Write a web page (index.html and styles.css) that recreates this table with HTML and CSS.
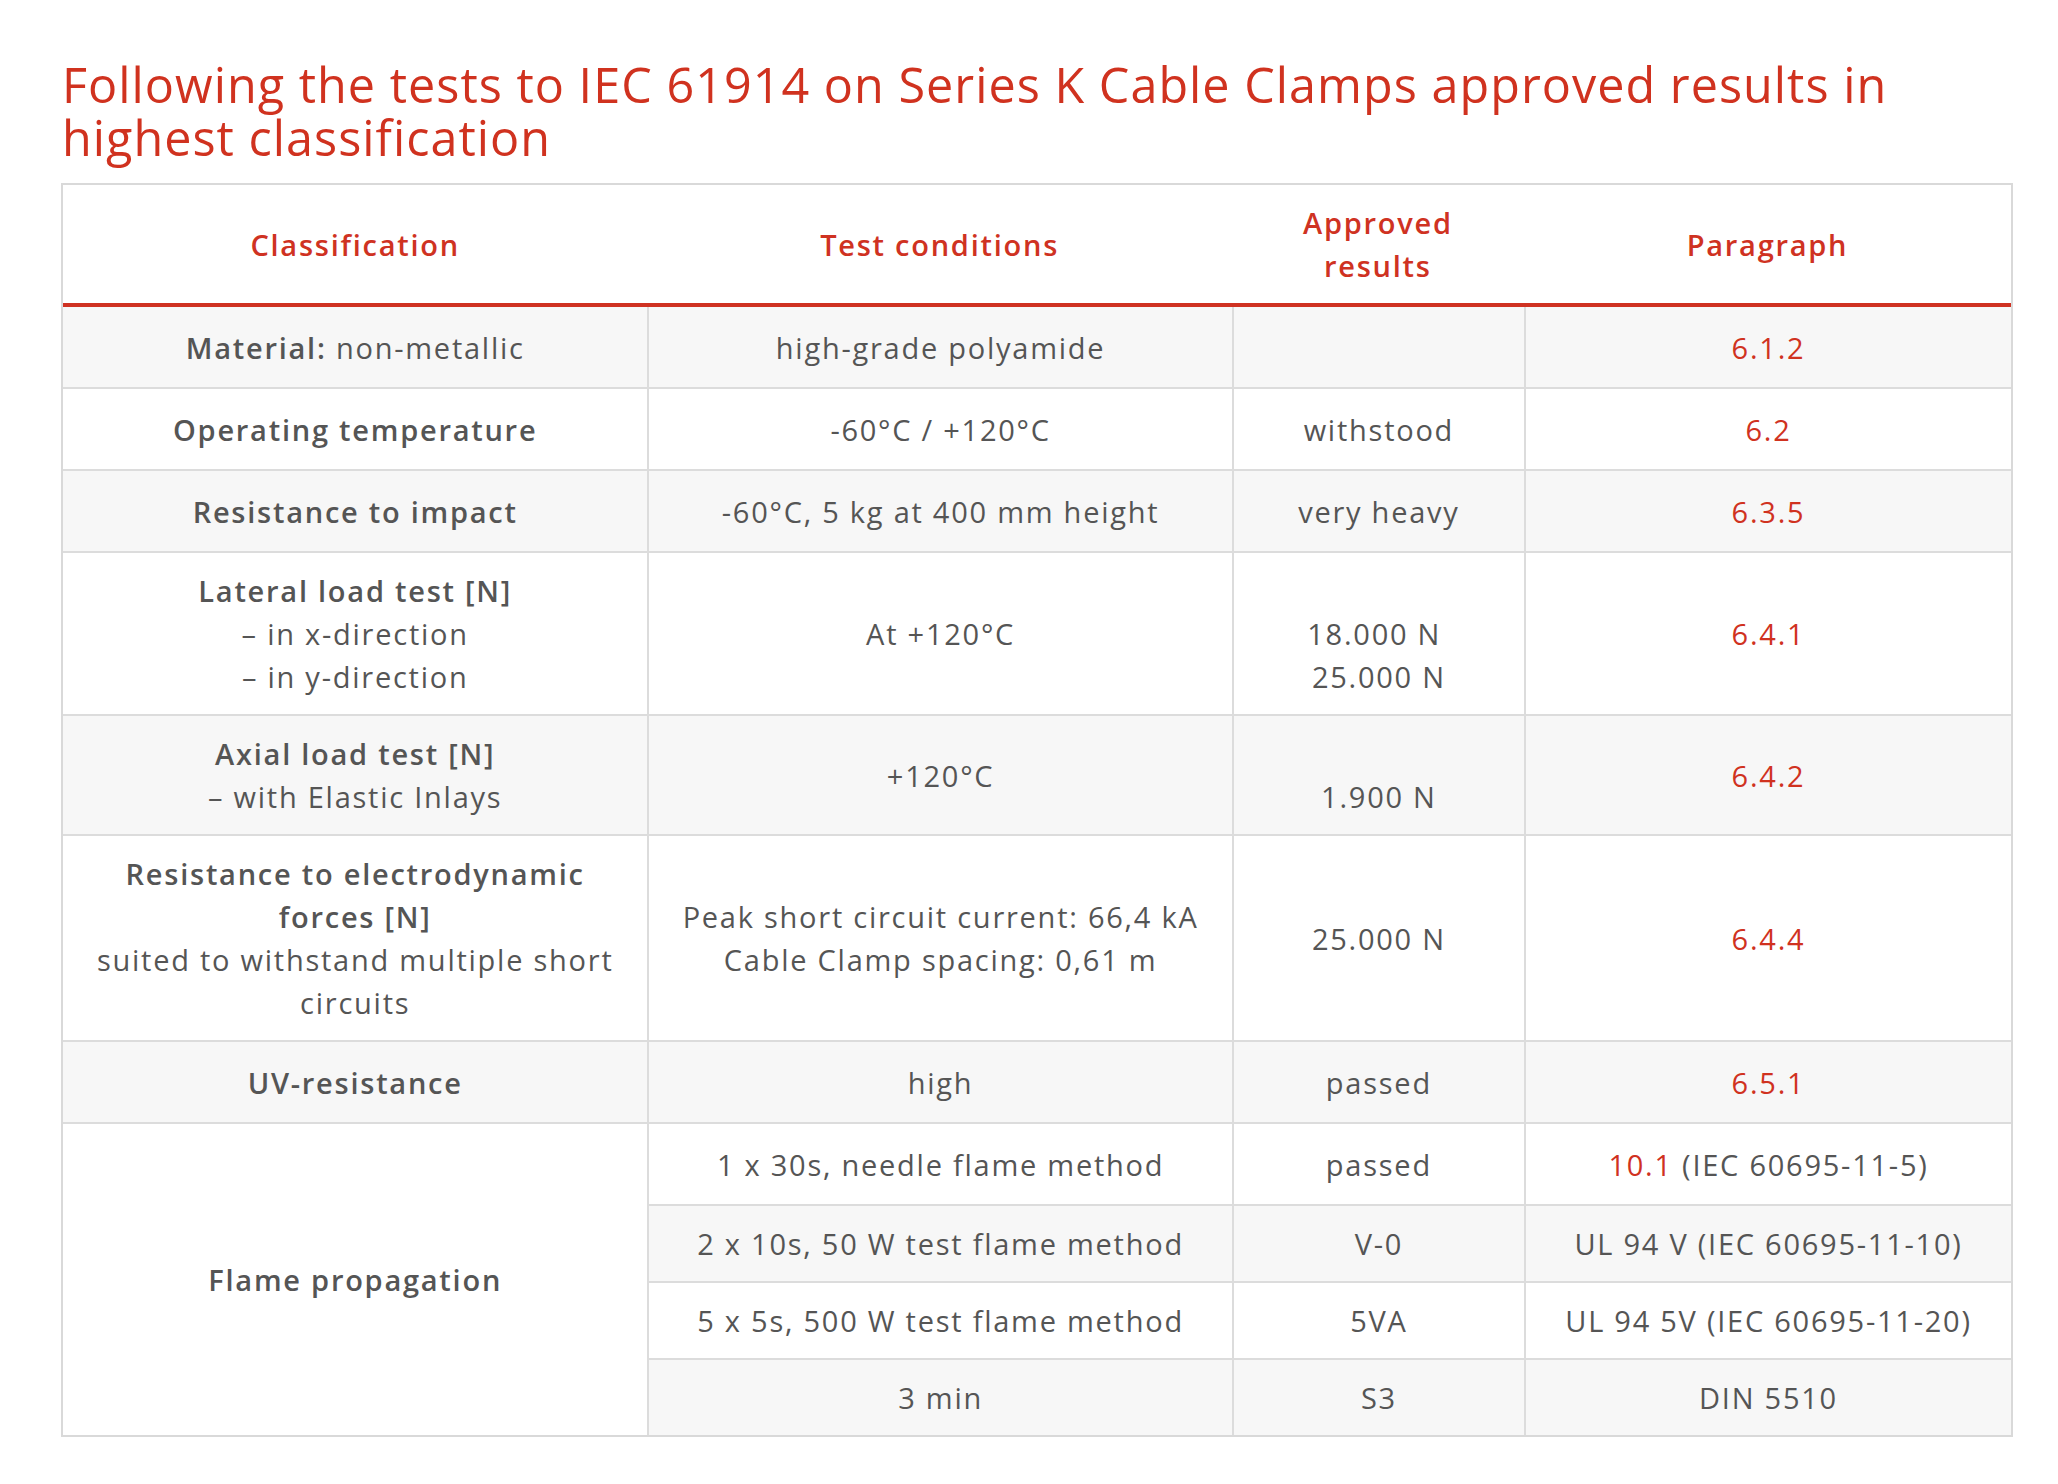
FILE: index.html
```html
<!DOCTYPE html>
<html lang="en">
<head>
<meta charset="utf-8">
<title>IEC 61914 Series K Cable Clamps</title>
<link rel="stylesheet" href="styles.css">
</head>
<body>
<main class="page">
  <h2 class="title">Following the tests to IEC 61914 on Series K Cable Clamps approved results in highest classification</h2>
  <table class="results">
    <colgroup>
      <col class="c1"><col class="c2"><col class="c3"><col class="c4">
    </colgroup>
    <thead>
      <tr>
        <th>Classification</th>
        <th>Test conditions</th>
        <th>Approved results</th>
        <th>Paragraph</th>
      </tr>
    </thead>
    <tbody>
      <tr class="odd first">
        <td class="cls"><b>Material:</b> non-metallic</td>
        <td class="bl">high-grade polyamide</td>
        <td class="bl"></td>
        <td class="bl"><a class="ref">6.1.2</a></td>
      </tr>
      <tr>
        <td class="cls"><b>Operating temperature</b></td>
        <td class="bl">-60°C / +120°C</td>
        <td class="bl">withstood</td>
        <td class="bl"><a class="ref">6.2</a></td>
      </tr>
      <tr class="odd">
        <td class="cls"><b>Resistance to impact</b></td>
        <td class="bl">-60°C, 5 kg at 400 mm height</td>
        <td class="bl">very heavy</td>
        <td class="bl"><a class="ref">6.3.5</a></td>
      </tr>
      <tr>
        <td class="cls"><b>Lateral load test [N]</b><br>– in x-direction<br>– in y-direction</td>
        <td class="bl">At +120°C</td>
        <td class="bl"><br>18.000 N&nbsp;<br>25.000 N</td>
        <td class="bl"><a class="ref">6.4.1</a></td>
      </tr>
      <tr class="odd">
        <td class="cls"><b>Axial load test [N]</b><br>– with Elastic Inlays</td>
        <td class="bl">+120°C</td>
        <td class="bl"><br>1.900 N</td>
        <td class="bl"><a class="ref">6.4.2</a></td>
      </tr>
      <tr>
        <td class="cls"><b>Resistance to electrodynamic forces [N]</b><br>suited to withstand multiple short circuits</td>
        <td class="bl">Peak short circuit current: 66,4 kA<br>Cable Clamp spacing: 0,61 m</td>
        <td class="bl">25.000 N</td>
        <td class="bl"><a class="ref">6.4.4</a></td>
      </tr>
      <tr class="odd">
        <td class="cls"><b>UV-resistance</b></td>
        <td class="bl">high</td>
        <td class="bl">passed</td>
        <td class="bl"><a class="ref">6.5.1</a></td>
      </tr>
      <tr>
        <td class="cls" rowspan="4"><b>Flame propagation</b></td>
        <td class="bl">1 x 30s, needle flame method</td>
        <td class="bl">passed</td>
        <td class="bl"><a class="ref">10.1</a> (IEC 60695-11-5)</td>
      </tr>
      <tr class="odd">
        <td class="bl">2 x 10s, 50 W test flame method</td>
        <td class="bl">V-0</td>
        <td class="bl">UL 94 V (IEC 60695-11-10)</td>
      </tr>
      <tr>
        <td class="bl">5 x 5s, 500 W test flame method</td>
        <td class="bl">5VA</td>
        <td class="bl">UL 94 5V (IEC 60695-11-20)</td>
      </tr>
      <tr class="odd">
        <td class="bl">3 min</td>
        <td class="bl">S3</td>
        <td class="bl">DIN 5510</td>
      </tr>
    </tbody>
  </table>
</main>
</body>
</html>
```

FILE: styles.css
```css
html, body {
  margin: 0;
  padding: 0;
  background: #ffffff;
}

.page {
  padding: 58px 45px 40px 61px;
  font-family: "Open Sans", "Liberation Sans", sans-serif;
  color: #555555;
}

.title {
  margin: 0 0 19px 1px;
  font-size: 48.5px;
  line-height: 53px;
  font-weight: 400;
  letter-spacing: 1.03px;
  color: #d0321f;
}

.results {
  width: 1952px;
  border: 2px solid #d9d9d9;
  border-collapse: separate;
  border-spacing: 0;
  table-layout: fixed;
  font-size: 29px;
  line-height: 43px;
  letter-spacing: 1.75px;
}

.c1 { width: 30%; }
.c2 { width: 30%; }
.c3 { width: 15%; }
.c4 { width: 25%; }

.results th {
  padding: 16px 30px;
  border-bottom: 4px solid #cf3222;
  color: #cf3222;
  font-weight: 600;
  text-align: center;
  vertical-align: middle;
}

.results td {
  padding: 16px 24px;
  border-top: 2px solid #dcdcdc;
  text-align: center;
  vertical-align: middle;
  font-weight: 400;
}

.results tr.first td {
  border-top: 0;
}

.results td.bl {
  border-left: 2px solid #dcdcdc;
}

.results tr.odd td {
  background: #f7f7f7;
}

.results td b {
  font-weight: 600;
}

.ref {
  display: inline-block;
  padding: 2.5px 0;
  color: #d0321f;
}
```
